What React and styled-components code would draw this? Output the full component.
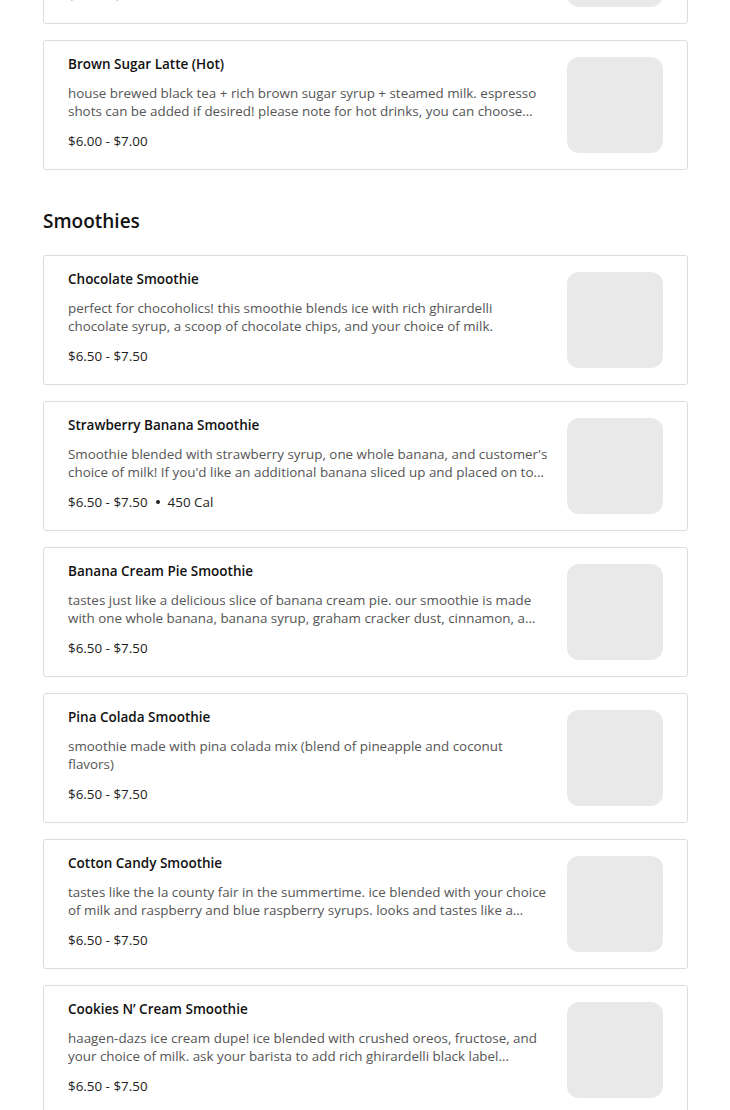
import React from 'react';
import styled, { createGlobalStyle } from 'styled-components';

const GlobalStyle = createGlobalStyle`
  body {
    margin: 0;
    background: #fff;
    font-family: 'Open Sans', 'Liberation Sans', sans-serif;
    color: #111;
  }
`;

const Page = styled.div`
  padding: 0 42px 0 43px;
  margin-top: -106px;
`;

const Section = styled.section`
  display: flex;
  flex-direction: column;
  gap: 16px;
  margin-bottom: 39px;
`;

const SectionTitle = styled.h2`
  margin: 0 0 6px;
  font-size: 19px;
  line-height: 24px;
  font-weight: 600;
  color: #111;
`;

const Card = styled.div`
  display: flex;
  align-items: flex-start;
  gap: 16px;
  padding: 14px 24px 16px;
  border: 1px solid #dcdcdc;
  border-radius: 3px;
  background: #fff;
`;

const Info = styled.div`
  flex: 1;
  min-width: 0;
  display: flex;
  flex-direction: column;
`;

const Name = styled.div`
  font-size: 13.5px;
  line-height: 18px;
  font-weight: 600;
  color: #111;
  margin-bottom: 11px;
`;

const Desc = styled.div`
  font-size: 13.4px;
  line-height: 18px;
  color: #555;
  display: -webkit-box;
  -webkit-line-clamp: 2;
  -webkit-box-orient: vertical;
  overflow: hidden;
  margin-bottom: 12px;
`;

const Meta = styled.div`
  display: flex;
  align-items: center;
  gap: 8px;
  font-size: 13.4px;
  line-height: 18px;
  color: #222;
`;

const Dot = styled.span`
  width: 4px;
  height: 4px;
  border-radius: 50%;
  background: #222;
`;

const Thumb = styled.div`
  flex: 0 0 96px;
  width: 96px;
  height: 96px;
  margin-top: 2px;
  border-radius: 12px;
  background: #e9e9e9;
`;

const teas = [
  {
    name: 'Brown Sugar Latte (Iced)',
    desc: 'house brewed black tea + rich brown sugar syrup + milk over ice. espresso shots can be added if desired! please note for iced drinks, you can choose...',
    price: '$6.00 - $7.00',
  },
  {
    name: 'Brown Sugar Latte (Hot)',
    desc: 'house brewed black tea + rich brown sugar syrup + steamed milk. espresso shots can be added if desired! please note for hot drinks, you can choose your milk and sweetness level.',
    price: '$6.00 - $7.00',
  },
];

const smoothies = [
  {
    name: 'Chocolate Smoothie',
    desc: 'perfect for chocoholics! this smoothie blends ice with rich ghirardelli chocolate syrup, a scoop of chocolate chips, and your choice of milk.',
    price: '$6.50 - $7.50',
  },
  {
    name: 'Strawberry Banana Smoothie',
    desc: "Smoothie blended with strawberry syrup, one whole banana, and customer's choice of milk! If you'd like an additional banana sliced up and placed on top, just ask.",
    price: '$6.50 - $7.50',
    cal: '450 Cal',
  },
  {
    name: 'Banana Cream Pie Smoothie',
    desc: 'tastes just like a delicious slice of banana cream pie. our smoothie is made with one whole banana, banana syrup, graham cracker dust, cinnamon, a touch of whipped cream.',
    price: '$6.50 - $7.50',
  },
  {
    name: 'Pina Colada Smoothie',
    desc: 'smoothie made with pina colada mix (blend of pineapple and coconut flavors)',
    price: '$6.50 - $7.50',
  },
  {
    name: 'Cotton Candy Smoothie',
    desc: 'tastes like the la county fair in the summertime. ice blended with your choice of milk and raspberry and blue raspberry syrups. looks and tastes like a cotton candy cloud.',
    price: '$6.50 - $7.50',
  },
  {
    name: 'Cookies N’ Cream Smoothie',
    desc: 'haagen-dazs ice cream dupe! ice blended with crushed oreos, fructose, and your choice of milk. ask your barista to add rich ghirardelli black label chocolate.',
    price: '$6.50 - $7.50',
  },
];

const Item = ({ item }) => (
  <Card>
    <Info>
      <Name>{item.name}</Name>
      <Desc>{item.desc}</Desc>
      <Meta>
        <span>{item.price}</span>
        {item.cal && <Dot />}
        {item.cal && <span>{item.cal}</span>}
      </Meta>
    </Info>
    <Thumb />
  </Card>
);

export default function App() {
  return (
    <Page>
      <GlobalStyle />
      <Section>
        {teas.map((t) => (
          <Item key={t.name} item={t} />
        ))}
      </Section>
      <Section>
        <SectionTitle>Smoothies</SectionTitle>
        {smoothies.map((s) => (
          <Item key={s.name} item={s} />
        ))}
      </Section>
    </Page>
  );
}
